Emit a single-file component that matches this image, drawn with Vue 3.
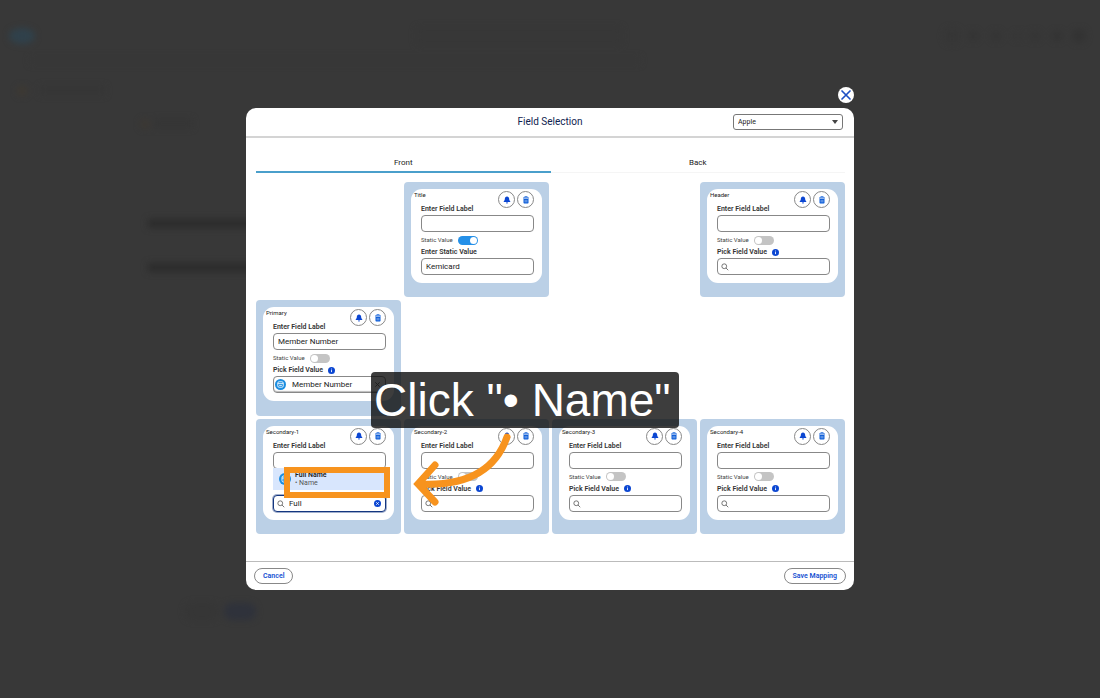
<script setup>
import { ref, reactive } from 'vue'

const device = ref('Apple')
const tab = ref('Front')
const cards = reactive([
  { id: 'title', name: 'Title', col: 2, row: 1, label: '', fixed: true, value: 'Kemicard' },
  { id: 'header', name: 'Header', col: 4, row: 1, label: '', fixed: false, value: '' },
  { id: 'primary', name: 'Primary', col: 1, row: 2, label: 'Member Number', fixed: false, value: 'Member Number', picked: true },
  { id: 'secondary-1', name: 'Secondary-1', col: 1, row: 3, label: '', fixed: false, value: 'Full', open: true },
  { id: 'secondary-2', name: 'Secondary-2', col: 2, row: 3, label: '', fixed: false, value: '' },
  { id: 'secondary-3', name: 'Secondary-3', col: 3, row: 3, label: '', fixed: false, value: '' },
  { id: 'secondary-4', name: 'Secondary-4', col: 4, row: 3, label: '', fixed: false, value: '' }
])
</script>

<template>
  <div class="page">
    <svg class="backdrop" viewBox="0 0 1100 698" preserveAspectRatio="none" aria-hidden="true">
      <g class="haze">
        <ellipse cx="22" cy="36" rx="13" ry="8" fill="#30414b" />
        <rect x="224" y="603" width="32" height="17" rx="8" fill="#2f323b" />
        <rect x="185" y="603" width="34" height="17" rx="8" fill="#363636" />
        <rect x="148" y="219" width="120" height="9" fill="#2c2c2c" />
        <rect x="148" y="263" width="120" height="9" fill="#2c2c2c" />
        <rect x="416" y="27" width="206" height="18" rx="4" fill="#373737" />
        <circle cx="22" cy="91" r="5" fill="#3e3932" />
        <rect x="40" y="86" width="65" height="9" fill="#363636" />
        <rect x="30" y="57" width="610" height="7" fill="#373737" />
        <circle cx="145" cy="124" r="5" fill="#3c3833" />
        <rect x="154" y="119" width="38" height="9" fill="#353535" />
        <circle cx="952" cy="36" r="8" fill="#363636" />
        <circle cx="973" cy="36" r="5" fill="#343434" />
        <circle cx="996" cy="36" r="5" fill="#353535" />
        <circle cx="1018" cy="36" r="4" fill="#363636" />
        <circle cx="1035" cy="36" r="5" fill="#353535" />
        <circle cx="1057" cy="36" r="5" fill="#333333" />
        <circle cx="1079" cy="36" r="7" fill="#333333" />
      </g>
    </svg>

    <div class="modal" role="dialog" aria-labelledby="modal-title">
      <button class="close" type="button" aria-label="Close">
        <svg viewBox="0 0 16 16"><path d="M4 4l8 8M12 4l-8 8" fill="none" stroke="#1c4fc4" stroke-width="1.7" stroke-linecap="round" /></svg>
      </button>

      <header class="head">
        <h1 id="modal-title">Field Selection</h1>
        <div class="device">
          <select v-model="device" aria-label="Device"><option>Apple</option></select>
          <svg viewBox="0 0 6 4"><path d="M0 0h6L3 4z" fill="#444" /></svg>
        </div>
      </header>

      <main class="content">
        <nav class="tabs">
          <button v-for="t in ['Front', 'Back']" :key="t" type="button" :class="{ active: tab === t }" @click="tab = t">{{ t }}</button>
        </nav>

        <div class="grid">
          <section v-for="c in cards" :key="c.id" class="slot" :class="['col' + c.col, 'row' + c.row]">
            <div class="card">
              <div class="top">
                <div class="names">
                  <span class="tag">{{ c.name }}</span>
                  <label class="caption" :for="c.id + '-label'">Enter Field Label</label>
                </div>
                <div class="actions">
                  <button type="button" aria-label="Notifications">
                    <svg viewBox="0 0 16 16"><path d="M8 1c-2.700 0-4.300 2-4.300 4.600 0 2.600-.8 3.800-2.200 5v1.400h13v-1.400c-1.400-1.200-2.200-2.400-2.200-5C12.300 3 10.700 1 8 1zM5.800 13h4.400a2.200 2.200 0 0 1-4.400 0z" fill="#0b46d2" /></svg>
                  </button>
                  <button type="button" aria-label="Delete">
                    <svg viewBox="0 0 16 16"><path d="M5.500 3V1.500h5V3M2 4h12" fill="none" stroke="#0b5cd8" stroke-width="1.800" /><path d="M3 6h10v7.500a1.500 1.500 0 0 1-1.500 1.500h-7A1.500 1.500 0 0 1 3 13.500z" fill="#0b5cd8" /><path d="M6.300 7.800v5M9.700 7.800v5" stroke="#fff" stroke-width="1" /></svg>
                  </button>
                </div>
              </div>
              <div class="fields" :class="{ covered: c.open }">
                <input :id="c.id + '-label'" v-model="c.label" class="box" type="text" />
                <label class="static">
                  Static Value
                  <input v-model="c.fixed" class="switch" type="checkbox" />
                </label>
                <label class="caption" :for="c.id + '-value'">
                  {{ c.fixed ? 'Enter Static Value' : 'Pick Field Value' }}
                  <svg v-if="!c.fixed" class="info" viewBox="0 0 12 12"><circle cx="6" cy="6" r="6" fill="#0b46d2" /><path d="M6 5.300v3.500M6 2.800v1.400" stroke="#fff" stroke-width="1.500" /></svg>
                </label>
                <div class="picker" :class="{ lookup: !c.fixed, picked: c.picked, open: c.open }">
                  <svg v-if="c.picked" class="lead" viewBox="0 0 24 24"><circle cx="12" cy="12" r="12" fill="#1b8de0" /><rect x="6" y="6" width="12" height="12" rx="3" fill="none" stroke="#fff" stroke-width="1.800" /><path d="M6 10h12M9 14h6" stroke="#fff" stroke-width="1.800" /></svg>
                  <svg v-else-if="!c.fixed" class="lead" viewBox="0 0 16 16"><circle cx="6.500" cy="6.500" r="4.800" fill="none" stroke="#555" stroke-width="1.600" /><path d="M10 10l4.500 4.500" stroke="#555" stroke-width="1.600" /></svg>
                  <input :id="c.id + '-value'" v-model="c.value" class="box" type="text" />
                  <button v-if="c.open || c.picked" class="clear" type="button" aria-label="Clear">
                    <svg v-if="c.open" viewBox="0 0 16 16"><circle cx="8" cy="8" r="8" fill="#0b46d2" /><path d="M5 5l6 6M11 5l-6 6" stroke="#fff" stroke-width="1.800" /></svg>
                    <svg v-else viewBox="0 0 16 16"><path d="M3 3l10 10M13 3L3 13" stroke="#555" stroke-width="2" /></svg>
                  </button>
                  <div v-if="c.open" class="list" role="listbox">
                    <div class="option" role="option" aria-selected="true">
                      <svg viewBox="0 0 24 24"><circle cx="12" cy="12" r="12" fill="#1b8de0" /><rect x="6" y="6" width="12" height="12" rx="3" fill="none" stroke="#fff" stroke-width="1.800" /><path d="M6 10h12M9 14h6" stroke="#fff" stroke-width="1.800" /></svg>
                      <div class="option-text"><strong>Full Name</strong><span>• Name</span></div>
                    </div>
                  </div>
                </div>
              </div>
            </div>
          </section>
        </div>
      </main>

      <footer class="foot">
        <button type="button">Cancel</button>
        <button type="button">Save Mapping</button>
      </footer>

      <div class="highlight"></div>
      <div class="callout">Click "• Name"</div>
      <svg class="arrow" viewBox="0 0 110 80" aria-hidden="true">
        <path d="M98 7C88 36 64 57 10 54M26 35L9 54L26 72" fill="none" stroke="#f7931e" stroke-width="7" stroke-linecap="round" stroke-linejoin="miter" />
      </svg>
    </div>
  </div>
</template>

<style>
body {
  margin: 0;
  background: #383838;
}
</style>

<style scoped>
* {
  box-sizing: border-box;
}
.page {
  position: relative;
  display: flex;
  align-items: center;
  justify-content: center;
  min-height: 100vh;
  background: #383838;
  font-family: Roboto, "Liberation Sans", sans-serif;
  font-size: 7px;
  color: #222;
}
button,
input,
select {
  margin: 0;
  padding: 0;
  border: 0;
  background: none;
  font: inherit;
  color: inherit;
}
svg {
  display: block;
}
.backdrop {
  position: absolute;
  inset: 0;
  width: 100%;
  height: 100%;
}
.haze {
  filter: blur(3px);
}
.modal {
  position: relative;
  width: calc(100% - 492px);
  min-width: 560px;
  border-radius: 10px;
  background: #fff;
}
.close {
  position: absolute;
  top: -21px;
  right: 0;
  width: 16px;
  height: 16px;
  border-radius: 50%;
  background: #fff;
}
.head {
  display: grid;
  grid-template-columns: 1fr auto 1fr;
  align-items: center;
  height: 30px;
  padding: 0 11px;
  border-bottom: 2px solid #d4d4d4;
}
h1 {
  grid-column: 2;
  margin: 0;
  font-size: 10px;
  font-weight: 400;
  line-height: 12px;
  color: #0f2350;
}
.device {
  display: flex;
  align-items: center;
  justify-self: end;
  width: 110px;
}
.device select {
  width: 100%;
  height: 16px;
  padding-left: 4px;
  appearance: none;
  border: 1px solid #777;
  border-radius: 3px;
}
.device svg {
  width: 6px;
  height: 4px;
  margin-left: -11px;
  pointer-events: none;
}
.content {
  padding: 14px 9px 27px 10px;
}
.tabs {
  display: grid;
  grid-template-columns: 1fr 1fr;
  margin-bottom: 9px;
}
.tabs button {
  height: 21px;
  box-shadow: inset 0 -1px #f5f5f5;
  font-size: 8px;
  line-height: 21px;
}
.tabs .active {
  box-shadow: inset 0 -2px #4a9fcb;
}
.grid {
  display: grid;
  grid-template-columns: repeat(4, 1fr);
  grid-template-rows: repeat(3, 1fr);
  gap: 3px;
  min-height: 352px;
}
.col1 { grid-column: 1; }
.col2 { grid-column: 2; }
.col3 { grid-column: 3; }
.col4 { grid-column: 4; }
.row1 { grid-row: 1; }
.row2 { grid-row: 2; }
.row3 { grid-row: 3; }
.slot {
  padding: 7px 7px 14px;
  border-radius: 4px;
  background: #bbd0e6;
}
.card {
  padding: 2px 8px 8px 3px;
  border-radius: 11px;
  background: #fff;
}
.top {
  display: flex;
  justify-content: space-between;
  height: 24px;
}
.names {
  display: flex;
  flex-direction: column;
  gap: 5px;
}
.tag {
  font-size: 6px;
  line-height: 8px;
}
.caption {
  display: flex;
  align-items: center;
  gap: 5px;
  height: 10px;
  font-weight: 600;
  line-height: 10px;
  color: #333;
}
.names .caption {
  padding-left: 7px;
}
.actions {
  display: flex;
  gap: 2px;
}
.actions button {
  display: grid;
  place-items: center;
  width: 17px;
  height: 17px;
  border: 1px solid #888;
  border-radius: 50%;
}
.actions svg {
  width: 8px;
  height: 8px;
}
.fields {
  display: flex;
  flex-direction: column;
  padding-left: 7px;
}
.box {
  display: block;
  width: 100%;
  height: 17px;
  padding: 0 4px;
  border: 1px solid #888;
  border-radius: 4px;
  background: #fff;
  font-size: 8px;
  outline: none;
}
.static {
  display: flex;
  align-items: center;
  gap: 5px;
  height: 10px;
  margin: 3px 0 2px;
  font-size: 6px;
  line-height: 10px;
  color: #444;
}
.covered > label {
  visibility: hidden;
}
.switch {
  display: flex;
  width: 20px;
  height: 9px;
  appearance: none;
  border-radius: 5px;
  background: #c4c4c4;
}
.switch::before {
  content: "";
  width: 7px;
  height: 7px;
  margin: 1px;
  border-radius: 50%;
  background: #fff;
}
.switch:checked {
  justify-content: flex-end;
  background: #2590e8;
}
.info {
  width: 7px;
  height: 7px;
}
.picker {
  position: relative;
  margin-top: 1px;
}
.lead {
  position: absolute;
  top: 5px;
  left: 4px;
  width: 8px;
  height: 8px;
}
.lookup .box {
  padding-left: 15px;
}
.picked .lead {
  top: 3px;
  left: 2px;
  width: 11px;
  height: 11px;
}
.picked .box {
  padding-left: 18px;
  box-shadow: inset 0 -1px 1px #bbb;
}
.open .box {
  border-color: #14367f;
  box-shadow: 0 0 0 1px #14367f66;
}
.clear {
  position: absolute;
  top: 5px;
  right: 5px;
  width: 7px;
  height: 7px;
}
.list {
  position: absolute;
  right: 0;
  bottom: 18px;
  left: 0;
  height: 26px;
  overflow: hidden;
  background: #fff;
}
.option {
  display: flex;
  align-items: center;
  gap: 4px;
  height: 22px;
  padding-left: 6px;
  background: #d8e6fd;
}
.option svg {
  width: 12px;
  height: 12px;
}
.option-text {
  display: flex;
  flex-direction: column;
  line-height: 8px;
}
.option-text strong {
  font-weight: 600;
}
.option-text span {
  color: #555;
}
.foot {
  display: flex;
  align-items: center;
  justify-content: space-between;
  height: 29px;
  padding: 0 8px;
  border-top: 1px solid #bbb;
}
.foot button {
  height: 16px;
  padding: 0 8px;
  border: 1px solid #888;
  border-radius: 8px;
  font-weight: 600;
  line-height: 14px;
  color: #1450d2;
}
.highlight {
  position: absolute;
  top: 359px;
  left: 38px;
  width: 106px;
  height: 31px;
  border: 6px solid #f7931e;
}
.callout {
  position: absolute;
  top: 264px;
  left: 125px;
  padding: 0 8px 0 3px;
  border-radius: 4px;
  background: rgba(12, 12, 12, 0.8);
  font-family: "Liberation Sans", sans-serif;
  font-size: 46px;
  line-height: 56px;
  white-space: nowrap;
  color: #fff;
}
.arrow {
  position: absolute;
  top: 322px;
  left: 163px;
  width: 110px;
  height: 80px;
}
</style>
